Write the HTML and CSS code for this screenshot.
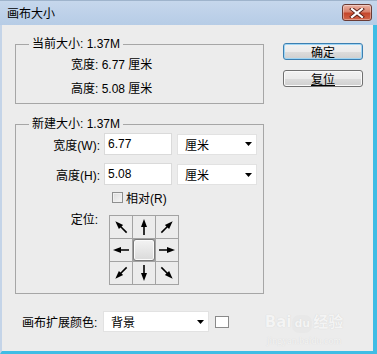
FILE: index.html
```html
<!DOCTYPE html>
<html>
<head>
<meta charset="utf-8">
<link rel="stylesheet" href="styles.css">
</head>
<body>
<div class="window">
  <div class="titlebar">
    <span class="title">画布大小</span>
    <div class="close">
      <svg width="16" height="10" viewBox="0 0 16 10">
        <path d="M3 1 L13 9 M13 1 L3 9" stroke="#5a2018" stroke-width="4" stroke-linecap="square"/>
        <path d="M3 1 L13 9 M13 1 L3 9" stroke="#ffffff" stroke-width="2.2" stroke-linecap="square"/>
      </svg>
    </div>
  </div>
  <div class="client">
    <div class="main">
      <div class="left">
        <fieldset class="group g1">
          <legend>当前大小: 1.37M</legend>
          <div class="info">宽度: 6.77 厘米</div>
          <div class="info">高度: 5.08 厘米</div>
        </fieldset>
        <fieldset class="group g2">
          <legend>新建大小: 1.37M</legend>
          <div class="row r1">
            <span class="lbl">宽度(W):</span>
            <div class="input">6.77</div>
            <div class="select unit"><span>厘米</span><svg class="caret" width="7" height="4" viewBox="0 0 7 4"><path d="M0 0 H7 L3.5 4 Z" fill="#000"/></svg></div>
          </div>
          <div class="row r2">
            <span class="lbl">高度(H):</span>
            <div class="input">5.08</div>
            <div class="select unit"><span>厘米</span><svg class="caret" width="7" height="4" viewBox="0 0 7 4"><path d="M0 0 H7 L3.5 4 Z" fill="#000"/></svg></div>
          </div>
          <div class="row r3">
            <span class="check"></span>
            <span class="checklbl">相对(R)</span>
          </div>
          <div class="row r4">
            <span class="lbl anchor-lbl">定位:</span>
            <div class="anchor">
              <div class="cell"><svg class="arr rot-315" viewBox="0 0 22 22"><path d="M11 3 L8 11 L14 11 Z" fill="#000"/><path d="M11 10 V19" stroke="#000" stroke-width="1.6"/></svg></div>
              <div class="cell"><svg class="arr" viewBox="0 0 22 22"><path d="M11 3 L8 11 L14 11 Z" fill="#000"/><path d="M11 10 V19" stroke="#000" stroke-width="1.6"/></svg></div>
              <div class="cell"><svg class="arr rot-45" viewBox="0 0 22 22"><path d="M11 3 L8 11 L14 11 Z" fill="#000"/><path d="M11 10 V19" stroke="#000" stroke-width="1.6"/></svg></div>
              <div class="cell"><svg class="arr rot-270" viewBox="0 0 22 22"><path d="M11 3 L8 11 L14 11 Z" fill="#000"/><path d="M11 10 V19" stroke="#000" stroke-width="1.6"/></svg></div>
              <div class="cell center"></div>
              <div class="cell"><svg class="arr rot-90" viewBox="0 0 22 22"><path d="M11 3 L8 11 L14 11 Z" fill="#000"/><path d="M11 10 V19" stroke="#000" stroke-width="1.6"/></svg></div>
              <div class="cell"><svg class="arr rot-225" viewBox="0 0 22 22"><path d="M11 3 L8 11 L14 11 Z" fill="#000"/><path d="M11 10 V19" stroke="#000" stroke-width="1.6"/></svg></div>
              <div class="cell"><svg class="arr rot-180" viewBox="0 0 22 22"><path d="M11 3 L8 11 L14 11 Z" fill="#000"/><path d="M11 10 V19" stroke="#000" stroke-width="1.6"/></svg></div>
              <div class="cell"><svg class="arr rot-135" viewBox="0 0 22 22"><path d="M11 3 L8 11 L14 11 Z" fill="#000"/><path d="M11 10 V19" stroke="#000" stroke-width="1.6"/></svg></div>
            </div>
          </div>
        </fieldset>
      </div>
      <div class="buttons">
        <div class="btn default">确定</div>
        <div class="btn"><span class="ul">复位</span></div>
      </div>
    </div>
    <div class="footer">
      <span class="flbl">画布扩展颜色:</span>
      <div class="select bgsel"><span>背景</span><svg class="caret" width="7" height="4" viewBox="0 0 7 4"><path d="M0 0 H7 L3.5 4 Z" fill="#000"/></svg></div>
      <span class="swatch"></span>
    </div>
    <div class="watermark">
      <div class="wm1">Bai<span class="paw">du</span>经验</div>
      <div class="wm2">jingyan.baidu.com</div>
    </div>
  </div>
</div>
</body>
</html>
```
FILE: styles.css
```css
* { box-sizing: border-box; }
html, body { margin: 0; padding: 0; background: #ececec; }
body {
  font-family: "Liberation Sans", "Noto Sans CJK SC", sans-serif;
  font-size: 12px;
  color: #000;
}
.window {
  width: 377px;
  height: 354px;
  display: flex;
  flex-direction: column;
  background: #ececec;
}
.titlebar {
  height: 25px;
  flex: none;
  display: flex;
  align-items: flex-start;
  justify-content: space-between;
  background: linear-gradient(#c6d7ec, #b6cce6);
  border-top: 1px solid #9fb4cc;
}
.title {
  margin-left: 7px;
  margin-top: 4px;
  font-family: "Noto Sans CJK SC", sans-serif;
  font-size: 12px;
  line-height: 16px;
}
.close {
  margin-top: 3px;
  margin-right: 5px;
  width: 30px;
  height: 17px;
  border: 1px solid #6b3b34;
  border-radius: 3px;
  background: linear-gradient(#eab2a4 0%, #d9826c 45%, #c5462b 55%, #d2664a 100%);
  box-shadow: inset 0 0 0 1px rgba(255,255,255,0.35);
  display: flex;
  align-items: center;
  justify-content: center;
}
.client {
  flex: 1;
  position: relative;
  border-left: 2px solid #c4d4e8;
  border-right: 4px solid #3fbde5;
  border-bottom: 3px solid #3fbde5;
  padding: 12px 0 0 13px;
  display: flex;
  flex-direction: column;
}
.main {
  display: flex;
  align-items: flex-start;
}
.left {
  width: 249px;
  display: flex;
  flex-direction: column;
}
.group {
  margin: 0;
  border: 1px solid #a6a6a6;
  min-width: 0;
  width: 249px;
}
.group legend {
  margin-left: 13px;
  padding: 0 3px;
  line-height: 14px;
}
.g1 { padding: 2px 0 2px 0; }
.info { line-height: 24px; height: 24px; padding-left: 55px; }
.g2 { margin-top: 13px; padding: 0 0 8px 0; }
.row { display: flex; align-items: center; }
.r1 { margin-top: 2px; height: 22px; }
.r2 { margin-top: 8px; height: 22px; }
.r3 { margin-top: 4px; height: 16px; padding-left: 96px; }
.r4 { margin-top: 10px; align-items: flex-start; }
.lbl {
  width: 84px;
  text-align: right;
  flex: none;
}
.input {
  margin-left: 4px;
  width: 68px;
  height: 22px;
  background: #fff;
  border: 1px solid #dadada;
  padding-left: 3px;
  line-height: 20px;
}
.select {
  height: 21px;
  background: #fff;
  border: 1px solid #e2e2e2;
  display: flex;
  align-items: center;
  justify-content: space-between;
  padding: 0 4px 0 7px;
  font-family: "Noto Sans CJK SC", sans-serif;
}
.unit { margin-left: 5px; width: 80px; }
.r2 .unit { margin-top: 1px; }
.caret { flex: none; }
.check {
  width: 11px;
  height: 11px;
  border: 1px solid #8e8f8f;
  background: linear-gradient(135deg, #dcdcdc, #f6f6f6);
  box-shadow: inset 0 0 0 1px #f0f0f0;
}
.checklbl { margin-left: 3px; }
.anchor-lbl {
  width: 82px;
  line-height: 14px;
  margin-top: -2px;
}
.anchor {
  margin-left: 11px;
  display: grid;
  grid-template-columns: repeat(3, 22px);
  grid-template-rows: repeat(3, 22px);
  gap: 1px;
  padding: 1px;
  background: #a3a3a3;
}
.cell {
  background: #ececec;
  display: flex;
  align-items: center;
  justify-content: center;
}
.cell.center {
  border: 1px solid #7a7a7a;
  border-radius: 3px;
  background: linear-gradient(#f3f3f3, #dadada);
  box-shadow: inset 0 0 0 1px #fbfbfb;
}
.arr { width: 22px; height: 22px; }
.rot-45 { transform: rotate(45deg); }
.rot-90 { transform: rotate(90deg); }
.rot-135 { transform: rotate(135deg); }
.rot-180 { transform: rotate(180deg); }
.rot-225 { transform: rotate(225deg); }
.rot-270 { transform: rotate(270deg); }
.rot-315 { transform: rotate(315deg); }
.buttons {
  margin-left: 19px;
  margin-top: 6px;
  display: flex;
  flex-direction: column;
  gap: 10px;
}
.btn {
  width: 80px;
  height: 17px;
  border: 1px solid #707070;
  border-radius: 3px;
  background: linear-gradient(#f2f2f2 0%, #ebebeb 50%, #dddddd 51%, #cfcfcf 100%);
  box-shadow: inset 0 0 0 1px #fafafa;
  display: flex;
  align-items: center;
  justify-content: center;
  line-height: 14px;
  font-family: "Noto Sans CJK SC", sans-serif;
}
.btn.default {
  border-color: #3c7fb1;
  box-shadow: inset 0 0 0 1px #9fd5f4;
}
.ul { text-decoration: underline; text-underline-offset: 1px; }
.footer {
  margin-top: 17px;
  margin-left: 7px;
  display: flex;
  align-items: center;
  height: 21px;
}
.flbl { width: 80px; }
.bgsel { margin-left: 1px; width: 106px; }
.swatch {
  margin-left: 6px;
  width: 14px;
  height: 12px;
  background: #fff;
  border: 1px solid #8a8a8a;
}
.watermark {
  position: absolute;
  left: 256px;
  top: 288px;
  color: #f4f4f4;
  text-shadow: 0 0 1px #cfcfcf;
  text-align: center;
  width: 92px;
}
.wm1 {
  font-family: "DejaVu Sans", "Noto Sans CJK SC", sans-serif;
  font-weight: bold;
  font-size: 15px;
  line-height: 18px;
}
.paw {
  display: inline-block;
  font-size: 11px;
  padding: 0 2px;
  border-radius: 7px;
  background: #e8e8e8;
  margin: 0 1px;
}
.wm2 {
  font-family: "Liberation Serif", serif;
  font-size: 10px;
  line-height: 12px;
  margin-top: 2px;
}
```
